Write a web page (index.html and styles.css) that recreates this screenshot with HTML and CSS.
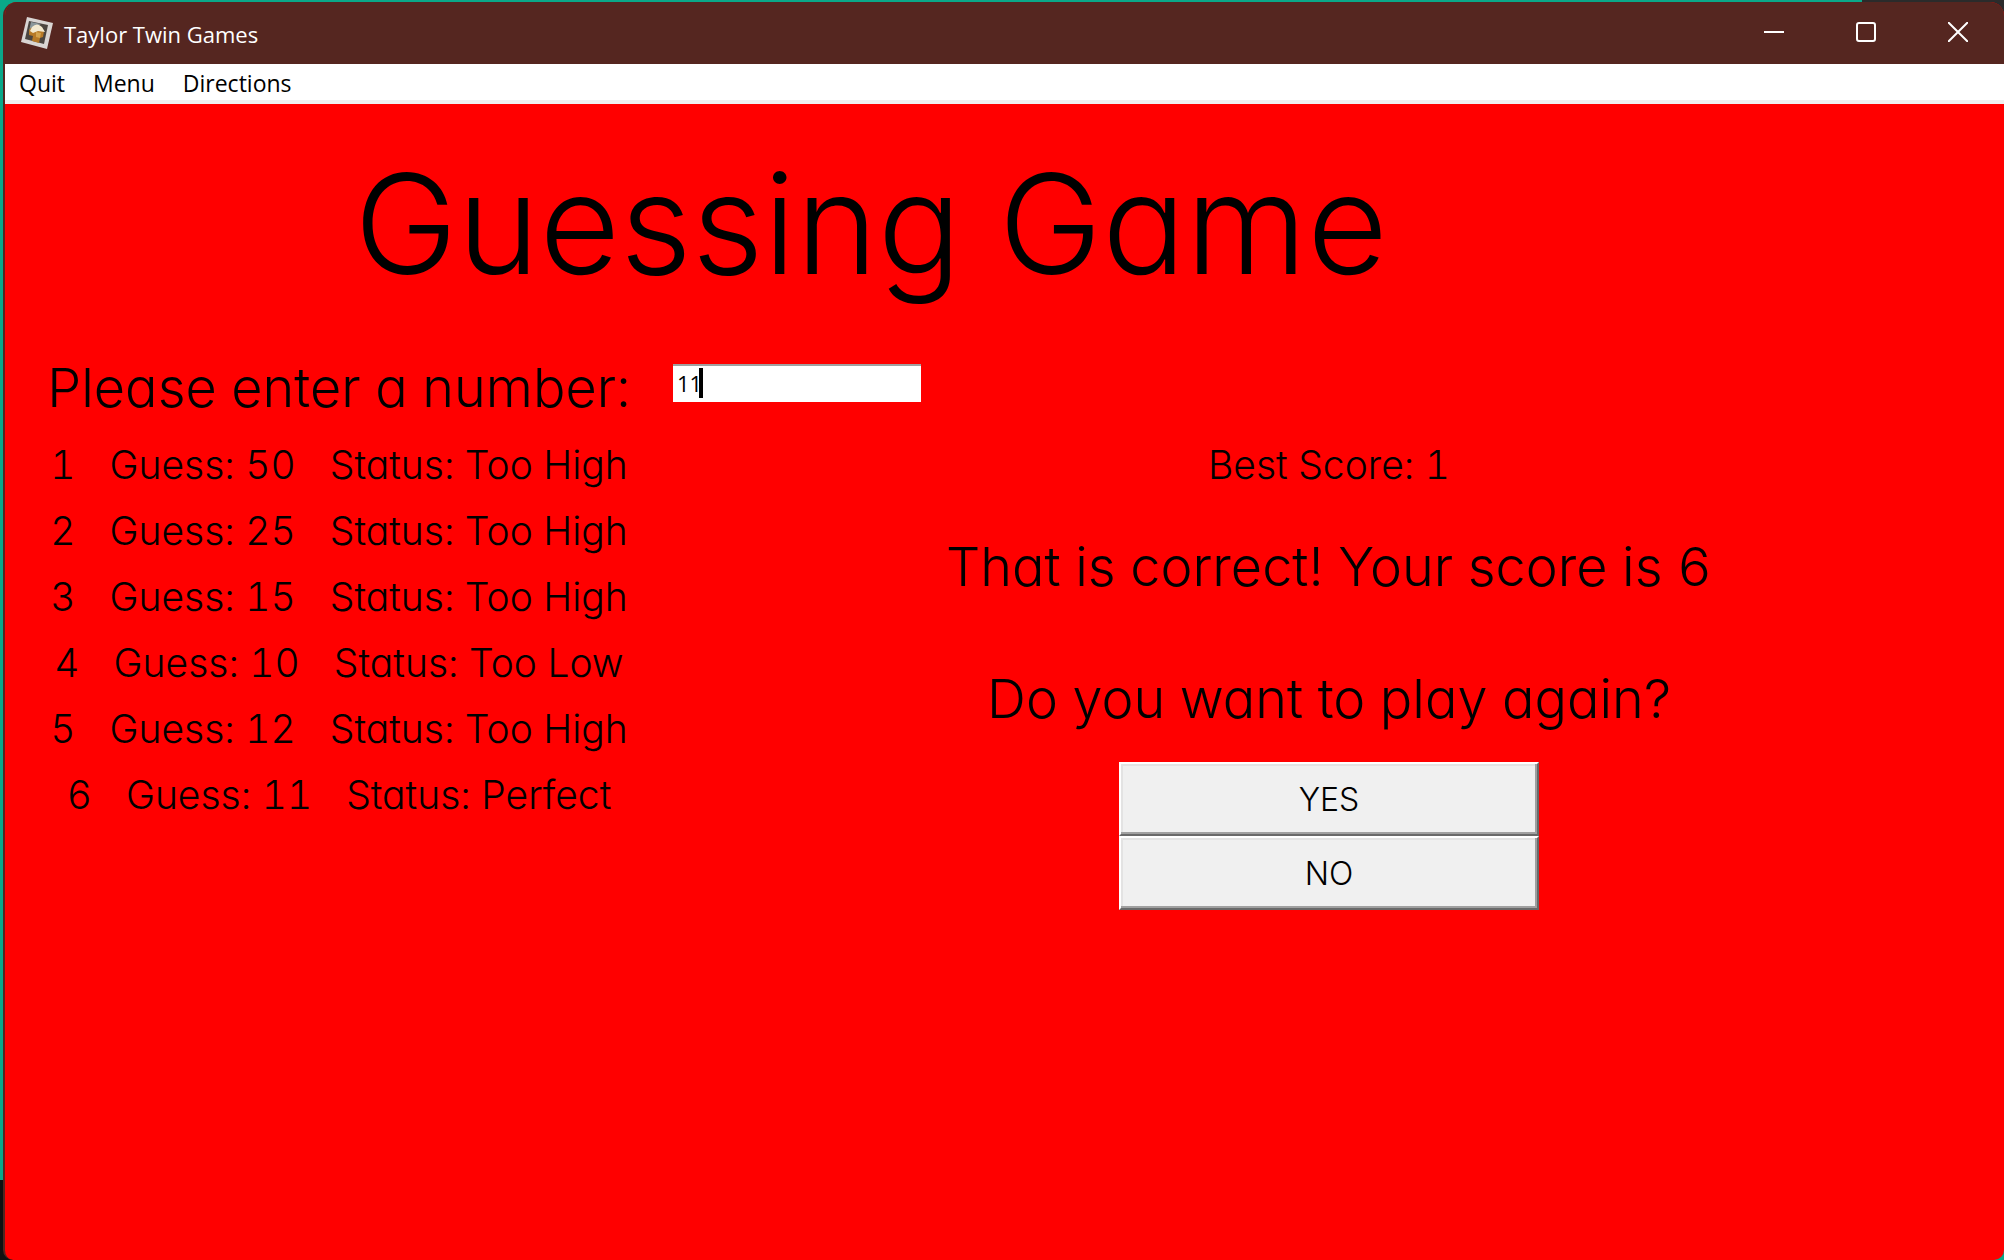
FILE: index.html
```html
<!DOCTYPE html>
<html lang="en">
<head>
<meta charset="utf-8">
<title>Taylor Twin Games</title>
<link rel="stylesheet" href="styles.css">
</head>
<body>
<div class="window">
  <header class="titlebar">
    <svg class="app-icon" viewBox="0 0 32 32" aria-hidden="true">
      <path d="M6 0 32 6 26 32 0 25Z" fill="#d9d5d3"/>
      <path d="M8 4 27 8 23 27 4 22Z" fill="#4b4540"/>
      <path d="M10 5 20 7 14 10 8 14Z" fill="#8b979b"/>
      <path d="M8 13q2-3 6-3l9 4-1 6-3 1-1 5-7-2 1-5-4-1Z" fill="#b77a28"/>
      <path d="M11 10q5-5 10 0l3 5-7-1-5 2-3-2Z" fill="#f3e9cf"/>
      <path d="M15 15 20 16 19 21 15 20Z" fill="#d4a34d"/>
    </svg>
    <span class="app-name">Taylor Twin Games</span>
    <div class="window-controls">
      <button type="button" aria-label="Minimize"><svg viewBox="0 0 20 20"><path d="M0 10H20"/></svg></button>
      <button type="button" aria-label="Maximize"><svg viewBox="0 0 20 20"><rect x="1" y="1" width="18" height="18" rx="2"/></svg></button>
      <button type="button" aria-label="Close"><svg viewBox="0 0 20 20"><path d="M0 0 20 20M20 0 0 20"/></svg></button>
    </div>
  </header>
  <nav class="menubar">
    <button type="button">Quit</button>
    <button type="button">Menu</button>
    <button type="button">Directions</button>
  </nav>
  <main class="game">
    <h1 class="game-title">Guessing Game</h1>
    <label class="prompt" for="guess">Please enter a number:</label>
    <div class="entry">
      <input id="guess" type="text" value="11">
      <span class="caret"></span>
    </div>
    <ol class="guesses">
      <li><span>1</span><span>Guess: 50</span><span>Status: Too High</span></li>
      <li><span>2</span><span>Guess: 25</span><span>Status: Too High</span></li>
      <li><span>3</span><span>Guess: 15</span><span>Status: Too High</span></li>
      <li><span>4</span><span>Guess: 10</span><span>Status: Too Low</span></li>
      <li><span>5</span><span>Guess: 12</span><span>Status: Too High</span></li>
      <li><span>6</span><span>Guess: 11</span><span>Status: Perfect</span></li>
    </ol>
    <section class="result">
      <p class="best">Best Score: 1</p>
      <p class="message">That is correct! Your score is 6</p>
      <p class="message">Do you want to play again?</p>
      <div class="answers">
        <button type="button">YES</button>
        <button type="button">NO</button>
      </div>
    </section>
  </main>
</div>
</body>
</html>
```
FILE: styles.css
```css
* {
  box-sizing: border-box;
}

body {
  margin: 0;
  min-height: 100vh;
  padding: 2px 0 0 3px;
  display: flex;
  background:
    linear-gradient(#2b2b2b, #2b2b2b) top right / 142px 24px no-repeat,
    linear-gradient(#111, #111) bottom left / 24px 80px no-repeat,
    #0aa889;
  color: #000;
  font-family: "Open Sans", sans-serif;
}

button {
  border: 0;
  padding: 0;
  background: none;
  color: inherit;
  font: inherit;
}

.window {
  flex: 1;
  display: flex;
  flex-direction: column;
  overflow: hidden;
  border-left: 2px solid #55261f;
  border-radius: 14px 14px 10px 10px;
  background: #f00;
}

.titlebar {
  height: 62px;
  padding-left: 16px;
  display: flex;
  align-items: center;
  gap: 11px;
  background: #552620;
  color: #fff;
}

.app-icon {
  width: 32px;
  height: 32px;
}

.app-name {
  padding-top: 2px;
  font-size: 22px;
  line-height: 32px;
}

.window-controls {
  height: 60px;
  align-self: flex-start;
  margin-left: auto;
  display: flex;
}

.window-controls button {
  width: 92px;
  display: flex;
  align-items: center;
  justify-content: center;
}

.window-controls svg {
  width: 20px;
  height: 20px;
  fill: none;
  stroke: #fff;
  stroke-width: 2;
}

.menubar {
  height: 40px;
  padding-left: 14px;
  display: flex;
  gap: 28px;
  border-bottom: 4px solid #f0f0f0;
  background: #fff;
  font-size: 23px;
  line-height: 38px;
}

.game {
  flex: 1;
  display: grid;
  grid-template-columns: 668fr 248fr 816fr 267fr;
  grid-template-rows: 240px 88px auto 1fr;
  font-family: "Century Gothic", Inter, sans-serif;
  font-feature-settings: "cv11", "tnum";
  font-weight: 300;
}

.game-title {
  grid-column: 1 / 4;
  margin: 0;
  font-size: 139px;
  font-weight: 300;
  line-height: 240px;
  text-align: center;
}

.prompt {
  grid-column: 1;
  font-size: 54px;
  line-height: 88px;
  text-align: center;
  white-space: nowrap;
}

.entry {
  position: relative;
  margin-top: 20px;
}

.entry input {
  display: block;
  width: 100%;
  height: 38px;
  border: 0;
  border-top: 2px solid #a0a0a0;
  border-radius: 0;
  padding: 0 4px 2px;
  background: #fff;
  color: #000;
  font: 22px "Open Sans", sans-serif;
}

.caret {
  position: absolute;
  top: 4px;
  left: 26px;
  width: 4px;
  height: 30px;
  background: #000;
}

.guesses {
  grid-column: 1;
  margin: 0;
  padding: 0;
  list-style: none;
  font-size: 39px;
  line-height: 66px;
}

.guesses li {
  display: flex;
  justify-content: center;
  gap: 34px;
  white-space: nowrap;
}

.result {
  grid-column: 3;
  text-align: center;
  white-space: nowrap;
}

.result p {
  margin: 0;
}

.best {
  font-size: 39px;
  line-height: 66px;
}

.message {
  height: 132px;
  font-size: 54px;
  line-height: 138px;
}

.answers {
  width: 420px;
  margin: 0 auto;
  display: flex;
  flex-direction: column;
}

.answers button {
  height: 74px;
  border: 2px solid;
  border-color: #fff #696969 #696969 #fff;
  background: #f0f0f0;
  box-shadow: inset -2px -2px #a0a0a0, inset 2px 2px #e3e3e3;
  font-size: 32px;
}
```
